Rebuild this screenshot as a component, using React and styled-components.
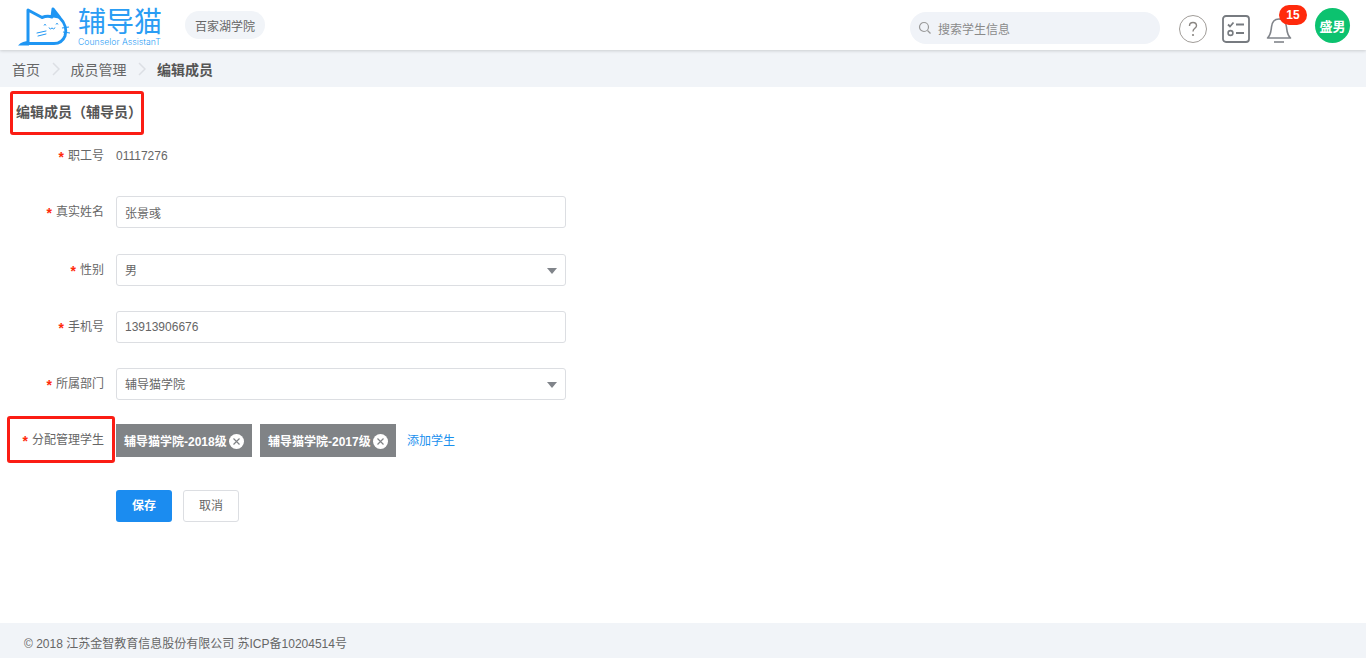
import React from "react";
import styled, { createGlobalStyle } from "styled-components";

const Global = createGlobalStyle`
  html, body { margin: 0; padding: 0; background: #fff; }
  body { font-family: "Liberation Sans", "Noto Sans CJK SC", sans-serif; font-size: 12px; color: #555; }
  * { box-sizing: border-box; }
`;

const Page = styled.div`
  position: relative; width: 1366px; height: 658px; overflow: hidden;
  display: flex; flex-direction: column;
`;
const Header = styled.header`
  height: 50px; flex: none; display: flex; align-items: center; background: #fff;
  padding: 0 16px 0 18px; box-shadow: 0 1px 3px rgba(0,0,0,.16); position: relative; z-index: 1;
`;
const Logo = styled.div`display: flex; align-items: flex-start; width: 167px; height: 50px; padding-top: 6px;`;
const LogoWords = styled.div`display: flex; flex-direction: column; margin-left: 8px; color: #2a9df4;`;
const LogoName = styled.div`font-size: 28px; line-height: 34px; font-weight: 400; width: 84px; white-space: nowrap;`;
const LogoSub = styled.div`font-size: 8.7px; line-height: 9px; white-space: nowrap; font-family: "Inter", sans-serif; font-weight: 300; margin-top: -2px;`;
const School = styled.div`
  height: 28px; width: 80px; border-radius: 14px; background: #f1f4f8; color: #666;
  display: flex; align-items: center; justify-content: center; font-size: 12px;
`;
const Spacer = styled.div`flex: 1;`;
const Search = styled.div`
  width: 250px; height: 32px; border-radius: 16px; background: #f0f3f8; color: #8a8a8a;
  display: flex; align-items: center; gap: 6px; padding-left: 8px; margin: 6px 19px 0 0; font-size: 12px;
`;
const IconSlot = styled.div`display: flex; margin: 8px ${p => p.$mr}px 0 0; position: relative;`;
const Badge = styled.span`
  position: absolute; left: 13px; top: -10px; width: 28px; height: 20px; border-radius: 10px;
  background: #ff2a0c; color: #fff; font-size: 12px; font-weight: 700;
  display: flex; align-items: center; justify-content: center;
`;
const Avatar = styled.div`
  width: 35px; height: 35px; border-radius: 50%; background: #0cc26f; color: #fff;
  font-size: 13px; font-weight: 700; display: flex; align-items: center; justify-content: center;
`;
const Crumbs = styled.nav`
  height: 37px; flex: none; background: #f1f4f8; display: flex; align-items: center;
  padding-left: 12px; font-size: 14px; color: #666;
`;
const Crumb = styled.span`font-weight: ${p => (p.$current ? 700 : 400)}; color: ${p => (p.$current ? "#555" : "#666")};`;
const Sep = styled.svg`margin: 0 11px 0 11.5px; flex: none;`;
const Main = styled.main`flex: 1; padding: 0 0 0 16px; position: relative;`;
const Title = styled.h2`
  margin: 0; height: 53px; padding-top: 15px; font-size: 14px; line-height: 20px; font-weight: 700; color: #555;
`;
const Row = styled.div`
  display: flex; align-items: center; height: ${p => p.$h}px;
  margin-bottom: ${p => p.$mb}px;
`;
const Label = styled.label`
  width: 88px; flex: none; text-align: right; margin-right: 12px; color: #666; font-size: 12px;
  position: relative; top: -2px;
`;
const Star = styled.span`color: #ff2a0c; margin-right: 4px; font-size: 14px; font-weight: 700; font-family: "Liberation Sans", sans-serif; position: relative; top: 2px;`;
const Static = styled.span`color: #666; font-size: 12px;`;
const Input = styled.div`
  width: 450px; height: 32px; border: 1px solid #dcdee2; border-radius: 3px; background: #fff;
  display: flex; align-items: center; justify-content: space-between;
  padding: 0 8px ${p => (p.$select ? 2 : 0)}px; color: #666; font-size: 12px;
`;
const Caret = styled.span`
  width: 0; height: 0; border-left: 5px solid transparent; border-right: 5px solid transparent;
  border-top: 6px solid #80848a; margin-top: 3px;
`;
const Tag = styled.div`
  width: 136px; height: 33px; background: #808386; color: #fff; font-weight: 700; font-size: 12px;
  display: flex; align-items: center; padding-left: 8px; margin-right: 8px; white-space: nowrap;
`;
const TagClose = styled.span`
  width: 15px; height: 15px; border-radius: 50%; background: #fff; margin-left: 2px; margin-top: 2px;
  display: flex; align-items: center; justify-content: center; flex: none;
`;
const AddLink = styled.a`color: #1a90ee; font-size: 12px; margin-left: 3px; margin-top: -3px;`;
const Primary = styled.button`
  width: 56px; height: 32px; border: 0; border-radius: 3px; background: #1b8cf0; color: #fff;
  font: 700 12px "Liberation Sans", "Noto Sans CJK SC", sans-serif; padding: 0 0 3px; margin-right: 11px;
`;
const Ghost = styled.button`
  width: 56px; height: 32px; border: 1px solid #dcdee2; border-radius: 3px; background: #fff; color: #666;
  font: 400 12px "Liberation Sans", "Noto Sans CJK SC", sans-serif; padding: 0 0 3px;
`;
const Indent = styled.div`width: 100px; flex: none;`;
const Callout = styled.div`
  position: absolute; left: ${p => p.$x}px; top: ${p => p.$y}px; width: ${p => p.$w}px; height: ${p => p.$h}px;
  border: 3px solid #fb1d14; border-radius: 3px; pointer-events: none; z-index: 2;
`;
const Footer = styled.footer`
  height: 35px; flex: none; background: #f1f4f8; display: flex; align-items: center;
  padding: 4px 0 0 24px; color: #666; font-size: 12px;
`;

const LogoMark = () => (
  <svg width="52" height="40" viewBox="0 0 52 40" fill="none">
    <path d="M10 37 L10 4 L24 11.5 C28 10 31 10 34 11 L35 3 L42 12 C47 17 49 24 47 30 C45 35 41 37.5 36 37.5 L5 37.5" stroke="#1f96f3" strokeWidth="3" strokeLinejoin="round" />
    <path d="M0 39.5 C3 36 7 35 11 35 L11 39.5 Z" fill="#1f96f3" />
    <path d="M33 11 L35 2 L43 13 Z" fill="#1f96f3" />
    <path d="M19 27 l9 -2 M20 30 l8 -2 M31 22 q1.5 2 3 0 q1.5 2 3 0 M26 19 q1 -1.5 2 0 M38 18 q1 -1.5 2 0" stroke="#1f96f3" strokeWidth="1" strokeLinecap="round" />
    <path d="M44 22 l7 -1 M45 26 l7 1" stroke="#1f96f3" strokeWidth="1.2" />
  </svg>
);
const Chevron = () => (
  <Sep width="8" height="14" viewBox="0 0 8 14" fill="none"><path d="M1 1 L7 7 L1 13" stroke="#dcdfe4" strokeWidth="1.5" /></Sep>
);
const CloseX = () => (
  <svg width="9" height="9" viewBox="0 0 9 9"><path d="M1.5 1.5 L7.5 7.5 M7.5 1.5 L1.5 7.5" stroke="#808386" strokeWidth="1.2" /></svg>
);

const Field = ({ label, children, mb }) => (
  <Row $h={32} $mb={mb}>
    <Label><Star>*</Star>{label}</Label>
    {children}
  </Row>
);

export default function App() {
  return (
    <Page>
      <Global />
      <Header>
        <Logo>
          <LogoMark />
          <LogoWords>
            <LogoName>辅导猫</LogoName>
            <LogoSub>Counselor AssistanT</LogoSub>
          </LogoWords>
        </Logo>
        <School>百家湖学院</School>
        <Spacer />
        <Search>
          <svg width="14" height="14" viewBox="0 0 14 14" fill="none"><circle cx="6" cy="6" r="4.5" stroke="#999" strokeWidth="1.2" /><path d="M9.5 9.5 L12.5 12.5" stroke="#999" strokeWidth="1.2" /></svg>
          搜索学生信息
        </Search>
        <IconSlot $mr={15}>
          <svg width="28" height="28" viewBox="0 0 28 28" fill="none">
            <circle cx="14" cy="14" r="13.5" stroke="#a09c98" />
            <path d="M10.5 11 C10.5 8.5 12.2 7.5 14 7.5 C16 7.5 17.5 8.8 17.5 10.7 C17.5 13.2 14 13.5 14 16.5" stroke="#8a8682" strokeWidth="1.4" />
            <circle cx="14" cy="20" r="1.1" fill="#8a8682" />
          </svg>
        </IconSlot>
        <IconSlot $mr={16}>
          <svg width="28" height="28" viewBox="0 0 28 28" fill="none">
            <rect x="1" y="1" width="26" height="26" rx="3" stroke="#777b80" strokeWidth="1.8" />
            <path d="M6 9.5 l2 2 l3.5 -4 M14 9.5 h8 M14 18 h8" stroke="#777b80" strokeWidth="1.8" />
            <circle cx="8.5" cy="18" r="2.4" stroke="#777b80" strokeWidth="1.6" />
          </svg>
        </IconSlot>
        <IconSlot $mr={23}>
          <svg width="26" height="28" viewBox="0 0 26 28" fill="none">
            <path d="M1.5 23 C5 20 5 16 5.5 12 C6 7 9 4 13 4 C17 4 20 7 20.5 12 C21 16 21 20 24.5 23 Z" stroke="#80848a" strokeWidth="1.6" strokeLinejoin="round" />
            <path d="M8 27 H18" stroke="#80848a" strokeWidth="1.6" />
          </svg>
          <Badge>15</Badge>
        </IconSlot>
        <Avatar>盛男</Avatar>
      </Header>
      <Crumbs>
        <Crumb>首页</Crumb><Chevron />
        <Crumb>成员管理</Crumb><Chevron />
        <Crumb $current>编辑成员</Crumb>
      </Crumbs>
      <Main>
        <Title>编辑成员（辅导员）</Title>
        <Row $h={32} $mb={24}>
          <Label><Star>*</Star>职工号</Label>
          <Static>01117276</Static>
        </Row>
        <Field label="真实姓名" mb={26}><Input>张景彧</Input></Field>
        <Field label="性别" mb={25}><Input $select>男<Caret /></Input></Field>
        <Field label="手机号" mb={25}><Input>13913906676</Input></Field>
        <Field label="所属部门" mb={24}><Input $select>辅导猫学院<Caret /></Input></Field>
        <Row $h={33} $mb={33}>
          <Label><Star>*</Star>分配管理学生</Label>
          <Tag>辅导猫学院-2018级<TagClose><CloseX /></TagClose></Tag>
          <Tag>辅导猫学院-2017级<TagClose><CloseX /></TagClose></Tag>
          <AddLink>添加学生</AddLink>
        </Row>
        <Row $h={32} $mb={0}>
          <Indent />
          <Primary>保存</Primary>
          <Ghost>取消</Ghost>
        </Row>
        <Callout $x={10} $y={4} $w={134} $h={44} />
        <Callout $x={7} $y={329} $w={108} $h={47} />
      </Main>
      <Footer>© 2018 江苏金智教育信息股份有限公司 苏ICP备10204514号</Footer>
    </Page>
  );
}
